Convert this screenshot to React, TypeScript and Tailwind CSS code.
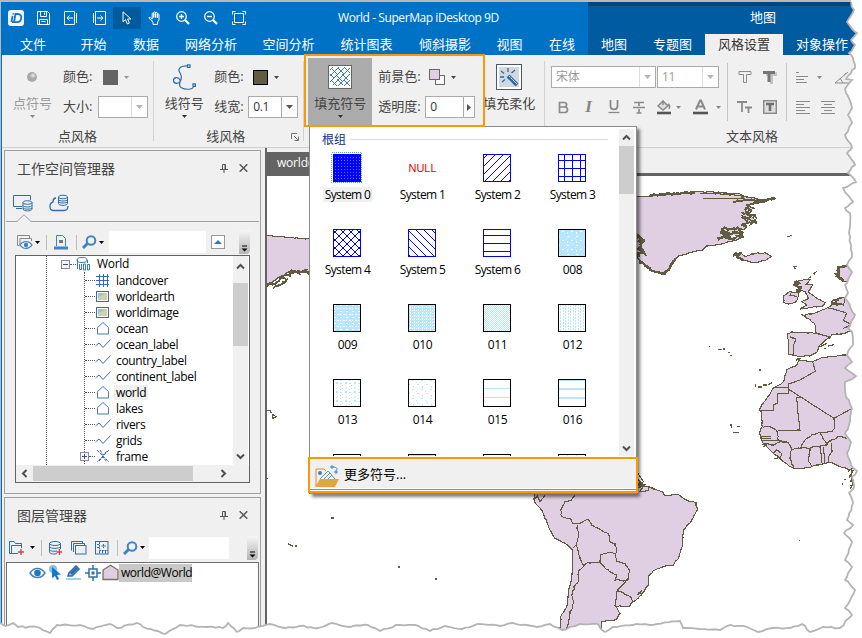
import React from "react";

type Pt = [number, number];

function parse(s: string): Pt[] {
  const n = s.trim().split(/[\s,]+/).map(Number);
  const out: Pt[] = [];
  for (let i = 0; i < n.length; i += 2) out.push([n[i], n[i + 1]]);
  return out;
}

// Subdivides a polyline and displaces the new vertices to give a ragged line.
function rough(s: string, amp: number, step: number, close = false): string {
  const p = parse(s);
  if (close) p.push(p[0]);
  let seed = 7;
  const rnd = () => {
    seed = (seed * 16807) % 2147483647;
    return seed / 2147483647 - 0.5;
  };
  let d = `M${p[0][0]} ${p[0][1]}`;
  for (let i = 1; i < p.length; i++) {
    const [ax, ay] = p[i - 1];
    const [bx, by] = p[i];
    const n = Math.max(1, Math.round(Math.hypot(bx - ax, by - ay) / step));
    for (let k = 1; k <= n; k++) {
      const t = k / n;
      const j = k === n ? 0 : amp;
      d += `L${(ax + (bx - ax) * t + rnd() * j).toFixed(1)} ${(ay + (by - ay) * t + rnd() * j).toFixed(1)}`;
    }
  }
  return close ? d + "Z" : d;
}

const RIGHT_EDGE =
  "851,2 854,10 847,22 852,29 857,33 851,40 855,45 849,53 853,58 855,68 846,79 852,80 845,89 852,108 848,115 852,123 845,135 852,148 847,153 855,165 848,173 856,182 843,188 853,202 845,208 850,213 849,233 852,257 847,265 852,272 845,285 848,293 845,298 855,315 848,328 852,332 853,345 847,355 852,362 845,368 856,376 845,382 846,397 852,408 849,425 845,433 851,442 847,453 851,465 857,471 852,477 854,488 849,493 853,503 847,520 853,525 844,533 852,542 845,560 852,567 845,580 855,590 845,608 852,615 840,628";
const BOTTOM_EDGE =
  "840,628 823,627 810,632 802,624 790,628 773,628 758,632 747,627 730,625 720,630 700,629 683,628 680,621 657,624 633,625 613,627 605,632 598,624 580,624 562,630 550,624 537,627 513,623 500,626 480,624 462,629 445,626 430,631 415,625 396,625 380,631 368,625 350,627 332,623 318,628 300,626 285,628 270,624 255,628 243,628 237,632 228,623 223,628 207,627 180,625 165,634 143,627 137,623 117,628 110,624 93,629 80,625 57,625 50,633 37,627 18,627 13,623 5,626 0,623";

function TornEdge() {
  const r = rough(RIGHT_EDGE, 1.6, 4);
  const b = rough(BOTTOM_EDGE, 1.6, 4);
  return (
    <svg className="pointer-events-none absolute inset-0" width="862" height="638" viewBox="0 0 862 638">
      <path d={r + b.replace(/^M/, "L") + "L0 638L862 638L862 0L851 0Z"} fill="#fff" />
      <path d={r + b.replace(/^M/, "L")} fill="none" stroke="#b4b4b4" strokeWidth="1.8" />
    </svg>
  );
}

function Caret({ c = "#444" }: { c?: string }) {
  return (
    <svg width="5" height="3" viewBox="0 0 5 3" className="shrink-0">
      <path d="M0 0H5L2.5 3Z" fill={c} />
    </svg>
  );
}

const G = "#8a8a8a";
const B = "#2e6da8";

/* ---------- title bar ---------- */

function QuickBar() {
  const cell = "flex h-[22px] w-[28px] items-center justify-center";
  return (
    <div className="flex h-[32px] items-center text-white">
      <div className="ml-[6px] flex h-4 w-4 items-center justify-center rounded-[3px] bg-[#f2f8fd]">
        <svg width="14" height="14" viewBox="0 0 14 14" fill="none" stroke="#1877c2" strokeWidth="1.8">
          <path d="M3.6 5L2.4 11M4.3 2.2V3.6" />
          <path d="M5 11.2L6.5 3H9C14 3 13 11.2 8 11.2H3" />
        </svg>
      </div>
      <div className="ml-[5px] flex items-center">
        <div className={cell}>
          <svg width="13" height="14" viewBox="0 0 13 14" fill="none" stroke="currentColor">
            <path d="M.5 .5H10.5L12.5 2.5V13.5H.5ZM3.5 .5V5.5H9.5V.5M7.5 1.5V4M2.5 13.5V8.5H10.5V13.5M4.5 10.5H8.5" />
          </svg>
        </div>
        <div className={cell}>
          <svg width="14" height="14" viewBox="0 0 14 14" fill="none" stroke="currentColor">
            <path d="M.5 .5H10.5V13.5H.5ZM12.5 2V12M9 7H3M5.5 4.5L3 7L5.5 9.5" />
          </svg>
        </div>
        <div className={cell}>
          <svg width="14" height="14" viewBox="0 0 14 14" fill="none" stroke="currentColor">
            <path d="M3.5 .5H13.5V13.5H3.5ZM1.5 2V12M5 7H11M8.5 4.5L11 7L8.5 9.5" />
          </svg>
        </div>
        <div className={cell + " bg-[#005a9e]"}>
          <svg width="11" height="14" viewBox="0 0 11 14" fill="none" stroke="currentColor">
            <path d="M1 .8V10.8L3.5 8.7L5.4 13L7.4 12.1L5.6 8H9Z" />
          </svg>
        </div>
        <div className={cell}>
          <svg width="14" height="14" viewBox="0 0 14 14" fill="none" stroke="currentColor">
            <path d="M4.5 10L1 7.4C.6 6.5 1.6 6 2.4 6.6L4.2 8V2.7C4.2 1.7 5.8 1.7 5.8 2.7V6.5M5.8 6.5V1.6C5.8 .5 7.5 .5 7.5 1.6V6.4V2C7.6 1 9.3 1 9.3 2V7V3.4C9.5 2.6 10.9 2.6 11 3.6V9L9.6 11V13.4H5V11.5L3.5 9.4" />
          </svg>
        </div>
        {[true, false].map((plus) => (
          <div className={cell} key={String(plus)}>
            <svg width="14" height="14" viewBox="0 0 14 14" fill="none" stroke="currentColor">
              <circle cx="5.5" cy="5.5" r="4.8" strokeWidth="1.2" />
              <path d={plus ? "M3 5.5H8M5.5 3V8" : "M3 5.5H8"} strokeWidth="1.4" />
              <path d="M9 9L13 13" strokeWidth="2.2" />
            </svg>
          </div>
        ))}
        <div className={cell}>
          <svg width="14" height="14" viewBox="0 0 14 14" fill="none" stroke="currentColor">
            <path d="M2.5 2.5H11.5V11.5H2.5ZM.5 3.5V.5H3.5M10.5 .5H13.5V3.5M13.5 10.5V13.5H10.5M3.5 13.5H.5V10.5" />
          </svg>
        </div>
      </div>
      <div className="ml-[85px] w-[164px] whitespace-nowrap text-[12px] tracking-[-0.42px]">World - SuperMap iDesktop 9D</div>
    </div>
  );
}

function Header() {
  const tab = "shrink-0 whitespace-nowrap text-center";
  return (
    <div className="flex h-[53px] w-full text-[13px] text-white">
      <div className="flex w-[586px] shrink-0 flex-col bg-[#0072c6]">
        <QuickBar />
        <div className="flex h-[21px] items-center leading-[21px]">
          <span className={tab + " w-[62px]"}>文件</span>
          <span className={tab + " w-[59px]"}>开始</span>
          <span className={tab + " w-[46px]"}>数据</span>
          <span className={tab + " w-[84px]"}>网络分析</span>
          <span className={tab + " w-[71px]"}>空间分析</span>
          <span className={tab + " w-[85px]"}>统计图表</span>
          <span className={tab + " w-[72px]"}>倾斜摄影</span>
          <span className={tab + " w-[57px]"}>视图</span>
          <span className={tab + " w-[48px]"}>在线</span>
        </div>
      </div>
      <div className="flex flex-1 flex-col border-t-4 border-[#004378] bg-[#005ba1]">
        <div className="h-[28px] pl-[162px] leading-[23px]">地图</div>
        <div className="flex h-[21px] leading-[21px]">
          <span className={tab + " w-[52px]"}>地图</span>
          <span className={tab + " w-[65px]"}>专题图</span>
          <span className={tab + " w-[78px] bg-[#f0f0f0] text-[#333]"}>风格设置</span>
          <span className={tab + " w-[78px]"}>对象操作</span>
        </div>
      </div>
    </div>
  );
}

/* ---------- ribbon ---------- */

function BigButton({ icon, label, w, caret = true, muted = false }: { icon: React.ReactNode; label: string; w: string; caret?: boolean; muted?: boolean }) {
  return (
    <div className={`flex h-[68px] shrink-0 flex-col items-center ${w} ${muted ? "text-[#9a9a9a]" : "text-[#444]"}`}>
      <div className="flex h-[38px] items-center">{icon}</div>
      <div className="h-[15px] whitespace-nowrap text-[13px] leading-[14px]">{label}</div>
      {caret && (
        <div className="mt-[4px] flex">
          <Caret c={muted ? "#888" : "#333"} />
        </div>
      )}
    </div>
  );
}

function Box({ value, w, side = false, muted = false }: { value: string; w: string; side?: boolean; muted?: boolean }) {
  return (
    <div className={`flex h-[22px] border border-[#ababab] bg-white ${w} ${muted ? "text-[#999]" : "text-[#333]"}`}>
      <div className="flex-1 pl-1 text-[12px] leading-[20px] tracking-[-0.3px]">{value}</div>
      <div className={`flex items-center justify-center border-l ${muted ? "border-[#ddd]" : "border-[#ababab] bg-[#fafafa]"} ${side ? "w-[11px]" : "w-[16px]"}`}>
        {side ? (
          <svg width="4" height="7" viewBox="0 0 4 7"><path d="M0 0L4 3.5L0 7Z" fill="#555" /></svg>
        ) : (
          <svg width="7" height="4" viewBox="0 0 7 4"><path d="M0 0H7L3.5 4Z" fill={muted ? "#b5b5b5" : "#555"} /></svg>
        )}
      </div>
    </div>
  );
}

function Fields({ a, b, swatch, box, w }: { a: string; b: string; swatch: React.ReactNode; box: React.ReactNode; w: string }) {
  return (
    <div className="flex h-[68px] flex-col pt-[4px] text-[13px] text-[#444]">
      <div className="flex h-[30px] items-center">
        <span className={`whitespace-nowrap ${w}`}>{a}</span>
        {swatch}
      </div>
      <div className="flex h-[30px] items-center">
        <span className={`whitespace-nowrap ${w}`}>{b}</span>
        {box}
      </div>
    </div>
  );
}

function LineSymbol() {
  return (
    <svg width="24" height="26" viewBox="0 0 24 26" fill="none" stroke={B} strokeWidth="1.2">
      <path d="M15.500 2C9 1.500 5.500 4.500 7.500 8S10 13 8.500 17C7 20.500 1.500 20 1.500 16.500S6.500 12.500 8 16C9 19 5.500 21 9 23.500C13 26 21 26 21.500 22.500" />
      <path d="M15.500 .8H18V3.300H15.500ZM21 19.800H23.400V22.300H21Z" fill="#f0f0f0" />
    </svg>
  );
}

function HatchSymbol() {
  return (
    <svg width="24" height="24" viewBox="0 0 24 24" fill="none">
      <rect x=".5" y=".5" width="23" height="23" fill="#fff" stroke="#666" />
      <path d="M2 5L5 2M2 11L11 2M2 17L17 2M5 20L22 3M10 21L22 9M16 21L22 15M2 9L6 13M4 4L10 10M10 3L16 9M17 3L22 8M8 10L14 16M14 9L20 15M3 15L9 21M9 14L15 20M16 15L22 21" stroke={B} strokeWidth=".9" />
    </svg>
  );
}

function WandSymbol() {
  return (
    <svg width="26" height="26" viewBox="0 0 26 26" fill="none">
      <rect x=".5" y=".5" width="25" height="25" fill="#fff" stroke="#4b5670" />
      <rect x="3" y="3" width="20" height="20" fill="#d3d8df" />
      <path d="M12 12L21 21" stroke={B} strokeWidth="4" />
      <path d="M13 12L21.500 20.500" stroke="#fff" strokeWidth="1" strokeDasharray="2 1" />
      <path d="M12 4V8M5 7L8 9.500M4 13H8M6 18L9 15.500M19 6L15.500 9" stroke={B} strokeWidth="1.3" />
    </svg>
  );
}

function FontTools() {
  const c = "flex w-[25px] items-center justify-center";
  return (
    <div className="flex flex-col pl-[6px] pt-[4px]">
      <div className="flex h-[30px] items-center gap-px">
        <Box value="宋体" w="w-[105px]" muted />
        <Box value="11" w="w-[62px]" muted />
      </div>
      <div className="flex h-[30px] items-center text-[#848484]">
        <span className={c}>
          <svg width="11" height="13" viewBox="0 0 11 13" fill="none" stroke={G} strokeWidth="1.700"><path d="M1.500 1.500H6C9.500 1.500 9.500 6 6 6H1.500ZM1.500 6H6.500C10.500 6 10.500 11.500 6.500 11.500H1.500Z" /></svg>
        </span>
        <span className={c + " font-['Liberation_Serif'] text-[17px] font-bold italic"}>I</span>
        <span className={c}>
          <svg width="12" height="14" viewBox="0 0 12 14" fill="none" stroke={G}><path d="M2.500 0V6C2.500 10.500 9.500 10.500 9.500 6V0" strokeWidth="1.800" /><path d="M.5 12.500H11.500" strokeWidth="1.300" /></svg>
        </span>
        <span className={c}>
          <svg width="12" height="13" viewBox="0 0 12 13"><path d="M1 1.500H11M6 1V5M0 6.500H12M6 8V12M3.500 12H8.500" stroke={G} strokeWidth="1.700" /></svg>
        </span>
        <span className={c}>
          <svg width="16" height="16" viewBox="0 0 16 16" fill="none"><path d="M7 2L12 7L7 11L2 7ZM7 6V1M12 5C14 6 14 8 13 10" stroke={G} strokeWidth="1.400" fill="#ddd" /><path d="M1 14H15" stroke="#555" strokeWidth="2.600" /></svg>
        </span>
        <span className="flex w-[12px]"><Caret c="#888" /></span>
        <span className={c}>
          <svg width="15" height="16" viewBox="0 0 15 16" fill="none"><path d="M3 10.500L7 1.500H8L12 10.500M4.500 7.500H10.500" stroke={G} strokeWidth="2" /><path d="M0 14H15" stroke="#555" strokeWidth="2.600" /></svg>
        </span>
        <span className="flex w-[8px] justify-end"><Caret c="#888" /></span>
      </div>
    </div>
  );
}

function TextEffects() {
  const c = "flex h-[30px] w-[25px] items-center justify-center";
  return (
    <div className="flex w-[58px] flex-wrap content-start pl-[4px] pt-[4px]">
      <span className={c}>
        <svg width="14" height="14" viewBox="0 0 14 14"><path d="M1 1.500H13V4.500H8.500V12.500H5.500V4.500H1Z" fill="none" stroke={G} /></svg>
      </span>
      <span className={c}>
        <svg width="14" height="14" viewBox="0 0 14 14"><path d="M3 2H14V6H10V14H7V6H3Z" fill="#c4c4c4" /><path d="M0 1H12V4H7.500V12H4.500V4H0Z" fill="#777" /></svg>
      </span>
      <span className={c}>
        <svg width="15" height="14" viewBox="0 0 15 14"><path d="M0 2H10M5 2V12M8 7.500H15M11.500 7.500V13" stroke={G} strokeWidth="1.800" /></svg>
      </span>
      <span className={c}>
        <svg width="14" height="14" viewBox="0 0 14 14"><rect x=".7" y=".7" width="12.600" height="12.600" fill="#ddd" stroke={G} strokeWidth="1.400" /><path d="M3 4H11M7 4V11" stroke="#707070" strokeWidth="2.600" /></svg>
      </span>
    </div>
  );
}

function ParagraphTools() {
  return (
    <div className="flex flex-col pl-[9px] pt-[4px]">
      <div className="flex h-[30px] items-center">
        <svg width="15" height="13" viewBox="0 0 15 13"><path d="M0 1.500H3M0 5.500H12M0 8.500H8M0 11.500H11" stroke={G} strokeWidth="1.200" /></svg>
        <span className="ml-[6px] flex"><Caret c="#888" /></span>
        <svg className="ml-[12px]" width="16" height="13" viewBox="0 0 16 13" fill="none" stroke={G}><path d="M14 1L1 12H15M6 7L9 12M10 4L12 2" /></svg>
      </div>
      <div className="flex h-[30px] items-center gap-[11px]">
        <svg width="14" height="14" viewBox="0 0 14 14"><path d="M0 1.500H14M0 4.500H8M0 7.500H14M0 10.500H9M0 13.500H14" stroke={G} /></svg>
        <svg width="14" height="14" viewBox="0 0 14 14"><path d="M0 1.500H14M3 4.500H11M0 7.500H14M3 10.500H11M0 13.500H14" stroke={G} /></svg>
      </div>
    </div>
  );
}

function Ribbon() {
  const sep = "mt-[6px] h-[80px] w-px shrink-0 bg-[#d2d2d2]";
  const cap = "text-center text-[13px] leading-[20px] text-[#444] h-[21px]";
  return (
    <div className="flex h-[93px] border-b border-[#cfcfcf] bg-[#f0f0f0]">
      <div className="flex w-[152px] flex-col">
        <div className="flex h-[72px] pt-[3px]">
          <BigButton w="w-[61px]" label="点符号" muted icon={<div className="-ml-[2px] h-[10px] w-[10px] rounded-full bg-[radial-gradient(circle_at_60%_35%,#eee_0,#a9a9a9_35%)]" />} />
          <Fields a="颜色:" b="大小:" w="w-[35px]"
            swatch={<><span className="ml-[5px] h-[15px] w-[15px] bg-[#646464]" /><span className="ml-[6px] flex"><Caret c="#999" /></span></>}
            box={<Box value="" w="w-[50px]" muted />} />
        </div>
        <div className={cap}>点风格</div>
      </div>
      <div className={sep} />
      <div className="flex w-[150px] flex-col">
        <div className="flex h-[72px] pt-[3px]">
          <BigButton w="w-[60px]" label="线符号" icon={<LineSymbol />} />
          <Fields a="颜色:" b="线宽:" w="w-[34px]"
            swatch={<><span className="ml-[5px] h-[15px] w-[15px] border border-black bg-[#605c42]" /><span className="ml-[6px] flex"><Caret /></span></>}
            box={<Box value="0.1" w="w-[50px]" />} />
        </div>
        <div className="flex items-center">
          <div className={cap + " w-[142px] shrink-0 pl-px"}>线风格</div>
          <svg className="-ml-[5px]" width="8" height="8" viewBox="0 0 8 8" fill="none" stroke="#777"><path d="M.5 6V.5H6M3 3L7 7M7.500 3.500V7.500H3.500" /></svg>
        </div>
      </div>
      <div className={sep} />
      <div className="flex w-[241px]">
        <div className="ml-[4px] mt-[3px] h-[68px] w-[64px] bg-[#acacac]">
          <BigButton w="w-[64px]" label="填充符号" icon={<HatchSymbol />} />
        </div>
        <div className="ml-[6px] mt-[3px]">
          <Fields a="前景色:" b="透明度:" w="w-[47px]"
            swatch={
              <>
                <svg className="ml-[4px]" width="16" height="16" viewBox="0 0 16 16"><rect x="6.500" y="6.500" width="9" height="9" fill="#fff" stroke="#666" /><rect x=".5" y=".5" width="10" height="10" fill="#e0cee2" stroke="#666" /></svg>
                <span className="ml-[6px] flex"><Caret /></span>
              </>
            }
            box={<Box value="0" w="w-[50px]" side />} />
        </div>
        <div className="ml-[9px] mt-[3px]">
          <BigButton w="w-[50px]" label="填充柔化" caret={false} icon={<WandSymbol />} />
        </div>
      </div>
      <div className={sep} />
      <div className="flex flex-1 flex-col">
        <div className="flex h-[72px] pt-[3px]">
          <div className="w-[182px]"><FontTools /></div>
          <div className="mt-[5px] h-[58px] w-px bg-[#c4c4c4]" />
          <TextEffects />
          <div className="mt-[5px] h-[58px] w-px bg-[#c4c4c4]" />
          <ParagraphTools />
        </div>
        <div className={cap + " pl-[97px]"}>
          <div className="w-[220px]">文本风格</div>
        </div>
      </div>
    </div>
  );
}

/* ---------- docked panels ---------- */

function PanelTitle({ text }: { text: string }) {
  return (
    <div className="flex h-[34px] shrink-0 items-center pl-[12px] pr-[12px] text-[14px] text-[#444]">
      <span className="flex-1">{text}</span>
      <svg width="8" height="9" viewBox="0 0 8 9" fill="none" stroke="#555"><path d="M2.500 5.500V.5H5.500V5.500M5 1V5M0 5.500H8M4 6V9" /></svg>
      <svg className="ml-[11px]" width="9" height="8" viewBox="0 0 9 8" stroke="#555" strokeWidth="1.500"><path d="M.7 .3L8.300 7.700M8.300 .3L.7 7.700" /></svg>
    </div>
  );
}

function Search() {
  return (
    <svg width="15" height="14" viewBox="0 0 15 14" fill="none" stroke="#3f83c4">
      <circle cx="9" cy="5.500" r="4.300" strokeWidth="2" />
      <path d="M5.500 8.500L1 13" strokeWidth="3" />
    </svg>
  );
}

function More() {
  return (
    <div className="flex h-[24px] w-[11px] items-end justify-center rounded-br-[4px] bg-gradient-to-b from-[#f6f6f6] to-[#b4b4b4] pb-[2px]">
      <svg width="7" height="7" viewBox="0 0 7 7"><path d="M1 1H6" stroke="#000" /><path d="M.5 3.500H6.500L3.500 6.500Z" fill="#000" /></svg>
    </div>
  );
}

const tree: [string, string][] = [
  ["landcover", "grid"], ["worldearth", "image"], ["worldimage", "image"], ["ocean", "region"], ["ocean_label", "line"],
  ["country_label", "line"], ["continent_label", "line"], ["world", "region"], ["lakes", "region"], ["rivers", "line"], ["grids", "line"], ["frame", "cad"],
];

function TreeIcon({ kind }: { kind: string }) {
  const s = "#3568c0";
  return (
    <svg className="shrink-0" width="16" height="14" viewBox="0 0 16 14" fill="none" stroke={s}>
      {kind === "grid" && <path d="M4.500 1V14M8.500 1V14M12.500 1V14M1 3.500H14M1 7.500H14M1 11.500H14" />}
      {kind === "image" && (<><rect x="1.500" y="2.500" width="12" height="10" fill="#fff" /><path d="M3 4H12V11H3Z" fill="#cfd3a0" stroke="none" /><path d="M3 4H11L3 8.500Z" fill="#98c2df" stroke="none" /></>)}
      {kind === "region" && <path d="M2.500 13V6.500L8 1.500L13.500 6.500V13Z" stroke="#3f7ac6" />}
      {kind === "line" && <path d="M.5 9L4 6L8 10.500L15.500 2.500" />}
      {kind === "cad" && <path d="M2 1L14 13M14 1L2 13M5 1L8 6L12 2M4 12L8 8L12 13" strokeDasharray="3 1" />}
    </svg>
  );
}

function Chevron({ d }: { d: string }) {
  return <svg width="9" height="9" viewBox="0 0 9 9" fill="none" stroke="#505050" strokeWidth="2"><path d={d} /></svg>;
}

function Expander({ plus = false }: { plus?: boolean }) {
  return (
    <svg className="shrink-0" width="9" height="9" viewBox="0 0 9 9"><rect x=".5" y=".5" width="8" height="8" fill="#f4f4f4" stroke="#8c8c8c" /><path d={plus ? "M2 4.500H7M4.500 2V7" : "M2 4.500H7"} stroke="#334f9b" /></svg>
  );
}

function Tree() {
  return (
    <div className="ml-[10px] flex h-[228px] w-[235px] flex-col border border-[#636363] bg-white text-[12px] leading-[16px] tracking-[-0.33px] text-black">
      <div className="flex h-[209px]">
        <div className="flex w-[217px] overflow-hidden">
          <div className="ml-[30px] h-full border-l border-dotted border-[#555]" />
          <div className="ml-[14px] w-[172px]">
            <div className="flex h-4 items-center">
              <Expander />
              <span className="w-[6px] border-t border-dotted border-[#555]" />
              <svg width="14" height="15" viewBox="0 0 14 15" fill="none" stroke="#3b79b7"><ellipse cx="6" cy="3" rx="5" ry="2.500" /><path d="M1.500 3V12M11.500 3V6M3.500 7V12.500H5.500V7M7.500 7V13H9.500V7ZM11.500 7.500H13.500V13H11.500Z" /></svg>
              <span className="ml-[7px]">World</span>
            </div>
            <div className="ml-[23px] border-l border-dotted border-[#555]">
              {tree.map(([name, kind]) => (
                <div className="flex h-4 items-center" key={name}>
                  {name === "frame" ? (
                    <><span className="-ml-[5px]"><Expander plus /></span><span className="w-[6px] border-t border-dotted border-[#555]" /></>
                  ) : (
                    <span className="w-[10px] border-t border-dotted border-[#555]" />
                  )}
                  <TreeIcon kind={kind} />
                  <span className={"ml-[3px] px-[2px] leading-[15px] " + (name === "world" ? "bg-[#f0f0f0]" : "")}>{name}</span>
                </div>
              ))}
            </div>
          </div>
        </div>
        <div className="flex w-[15px] flex-col items-center bg-[#f0f0f0] pb-1">
          <div className="flex h-[27px] items-center pb-[7px]"><Chevron d="M1 6.500L4.500 3L8 6.500" /></div>
          <div className="h-[63px] w-full bg-[#cdcdcd]" />
          <div className="flex-1" />
          <Chevron d="M1 2.500L4.500 6L8 2.500" />
        </div>
      </div>
      <div className="flex h-[17px] items-center bg-[#f0f0f0]">
        <span className="flex w-[17px] justify-center"><Chevron d="M6.500 1L3 4.500L6.500 8" /></span>
        <span className="h-[15px] w-[160px] bg-[#cdcdcd]" />
        <span className="ml-[26px] flex"><Chevron d="M2.500 1L6 4.500L2.500 8" /></span>
      </div>
    </div>
  );
}

function WorkspacePanel() {
  const vs = "h-[15px] w-px bg-[#bdbdbd]";
  return (
    <div className="flex h-[344px] flex-col border border-[#a0a0a0]">
      <PanelTitle text="工作空间管理器" />
      <div className="flex h-[29px] items-center pl-[8px] pt-[7px]">
        <svg width="20" height="18" viewBox="0 0 20 18" fill="none" stroke={B}><path d="M9 12.500H.5V1.500H17.500V6M3 14.500H9" /><ellipse cx="14.500" cy="8.500" rx="4.500" ry="1.800" fill="#f0f0f0" /><path d="M10 8.500V15C10 17.500 19 17.500 19 15V8.500M10 11.500C11 13.500 18 13.500 19 11.500M10 14C11 15.500 18 15.500 19 14" /></svg>
        <svg className="ml-[16px]" width="20" height="18" viewBox="0 0 20 18" fill="none" stroke={B}><path d="M7 4C4 4 4 8 4 8C0 9 0 16 4 16.500H15C18 16.500 19 15 19 12" strokeWidth="1.300" /><ellipse cx="14" cy="3" rx="4.500" ry="1.800" /><path d="M9.500 3V9.500C9.500 12 18.500 12 18.500 9.500V3M9.500 5.500C10 7.500 18 7.500 18.500 5.500M9.500 7.500C10 9.500 18 9.500 18.500 7.500" /></svg>
      </div>
      <svg width="255" height="10" viewBox="0 0 255 10" fill="none" stroke="#a0a0a0"><path d="M1 7.500H12L19 .8L26 7.500H254" /></svg>
      <div className="flex h-[31px] items-center pl-[10px] pt-[5px]">
        <div className="flex w-[31px] items-center">
          <svg className="ml-[2px]" width="16" height="15" viewBox="0 0 16 15" fill="none"><path d="M2 10.500H.5V.5H12.500V3M3 11V3.500H14.500V6" stroke="#888" /><path d="M3 10C6 5.500 12 5.500 15 10C12 14.500 6 14.500 3 10Z" fill="#fff" stroke="#3f83c4" strokeWidth="1.300" /><circle cx="9" cy="10" r="2.200" fill="#3f83c4" /></svg>
          <span className="ml-[2px] flex"><Caret c="#000" /></span>
        </div>
        <div className={vs} />
        <svg className="ml-[7px] mr-[8px]" width="14" height="15" viewBox="0 0 14 15" fill="none"><path d="M2.500 11V.5H8.500L11.500 3.500V11" stroke="#3f83c4" /><path d="M5 5H9V8H5Z" fill="#777" /><path d="M0 13H14" stroke="#3f83c4" strokeWidth="3" /></svg>
        <div className={vs} />
        <div className="ml-[5px] flex w-[27px] items-center"><Search /><span className="ml-[2px] flex"><Caret c="#000" /></span></div>
        <div className="h-[22px] w-[97px] bg-white" />
        <div className="ml-[5px] flex h-[14px] w-[14px] items-center justify-center border border-[#999] bg-white"><svg width="8" height="4" viewBox="0 0 8 4"><path d="M0 4L4 0L8 4Z" fill="#2f7bbf" /></svg></div>
        <div className="ml-[14px]"><More /></div>
      </div>
      <Tree />
    </div>
  );
}

function LayerPanel() {
  const vs = "h-[16px] w-px bg-[#bdbdbd]";
  return (
    <div className="mt-[3px] flex h-[142px] flex-col border border-[#a0a0a0]">
      <PanelTitle text="图层管理器" />
      <div className="flex h-[30px] items-center pl-[4px] pt-px">
        <svg width="15" height="14" viewBox="0 0 15 14" fill="none" stroke={B}><path d="M9 12.500H.5V.5H5L6.500 2.500H12.500V7M2.500 12V4.500H13" /><path d="M9 11H15M12 8V14" stroke="#d2492a" strokeWidth="1.400" /></svg>
        <span className="ml-[6px] mr-[6px] flex"><Caret c="#000" /></span>
        <div className={vs} />
        <svg className="ml-[7px]" width="13" height="14" viewBox="0 0 13 14" fill="none" stroke={B}><ellipse cx="6" cy="2.500" rx="5.500" ry="2" /><path d="M.5 2.500V11C.5 13 6 13.500 8 12.500M11.500 2.500V8M.5 5.500C1 8 11 8 11.500 5.500M.5 8.500C1 10.500 6 10.500 8 10" /><path d="M7.500 11H13M10.500 8V14" stroke="#d2492a" strokeWidth="1.400" /></svg>
        <svg className="ml-[9px]" width="16" height="14" viewBox="0 0 16 14" fill="none" stroke={B}><path d="M.5 9.500V.5H11.500V2.500M2.500 11V2.500H13.500V4.500" /><rect x="4.500" y="4.500" width="10.500" height="8.500" /></svg>
        <svg className="ml-[8px]" width="14" height="14" viewBox="0 0 14 14" fill="none" stroke={B}><rect x=".5" y=".5" width="12.500" height="12.500" /><path d="M4.500 1V9.500H13M2 3.500H4M2 6.500H4M4.500 10V13M7.500 10V13M10.500 10V13M8.500 3V7M6.500 5H11" strokeDasharray="2 .7" /></svg>
        <div className={"ml-[8px] " + vs} />
        <div className="ml-[5px] flex w-[26px] items-center"><Search /><span className="ml-[2px] flex"><Caret c="#000" /></span></div>
        <div className="h-[22px] w-[80px] bg-white" />
        <div className="ml-[18px]"><More /></div>
      </div>
      <div className="mx-[1px] flex flex-1 flex-col border border-[#707070] bg-white pl-[22px]">
        <div className="flex h-[19px] items-center">
          <svg width="17" height="12" viewBox="0 0 17 12" fill="none"><path d="M1 6C5 0 12 0 16 6C12 12 5 12 1 6Z" fill="#fff" stroke="#3f83c4" strokeWidth="1.500" /><circle cx="8.500" cy="6" r="3.300" fill="#1d78c5" /></svg>
          <svg className="ml-[3px]" width="13" height="15" viewBox="0 0 13 15"><circle cx="4" cy="4" r="4" fill="#8ac0ea" /><path d="M3 2L12 9.500L8 10L10 14L8 15L6 11L3 13Z" fill="#1579cb" /></svg>
          <svg className="ml-[3px]" width="17" height="15" viewBox="0 0 17 15" fill="none"><path d="M3 11L4 8L11 1L14 4L7 11Z" stroke="#2e6da8" strokeWidth="1.500" fill="#a9c7e0" /><path d="M6 9L12 3" stroke="#2e6da8" strokeWidth="3" /><path d="M1 14H16" stroke="#8ac0ea" strokeWidth="1.500" /></svg>
          <svg className="ml-[3px]" width="16" height="16" viewBox="0 0 16 16" fill="none" stroke="#2e6da8"><path d="M8 0V4M8 12V16M0 8H4M12 8H16" strokeWidth="1.500" /><rect x="4" y="4" width="8" height="8" strokeWidth="1.500" /><path d="M6.500 8H9.500" strokeWidth="3" /></svg>
          <svg className="ml-[1px]" width="17" height="17" viewBox="0 0 17 17"><path d="M1 15.500V6L8.500 1.200L16 6V15.500Z" fill="#e0cee2" stroke="#777266" strokeWidth="1.300" /></svg>
          <span className="h-[18px] w-[73px] whitespace-nowrap bg-[#c8c8c8] pl-[2px] text-[12px] leading-[18px] tracking-[-0.45px] text-black">world@World</span>
        </div>
      </div>
    </div>
  );
}

/* ---------- map ---------- */

function Land({ d, amp = 4 }: { d: string; amp?: number }) {
  return <path d={rough(d, amp, 8, true)} fill="#e0cee2" />;
}
function Border({ d, amp = 3 }: { d: string; amp?: number }) {
  return <path d={rough(d, amp, 8)} fill="none" />;
}

function WorldMap() {
  return (
    <svg className="block" width="595" height="462" viewBox="267 176 595 462" stroke="#605c42" strokeWidth="3.4" shapeRendering="crispEdges">
      <g transform="translate(260 120) scale(.33333)">
        <Land d="10,345 85,352 160,357 160,455 125,458 95,450 65,468 20,498" />
        <path d={rough("22,496 50,488 75,465 110,456 148,456", 12, 5)} fill="none" strokeWidth="6" />
        <path d={rough("40,503 75,488 80,480 55,495", 7, 5)} fill="none" strokeWidth="5" />
      </g>
      <g transform="translate(630 150) scale(.33333)">
        <Land d="10,142 60,138 130,132 200,125 250,126 330,132 345,140 385,148 438,145 400,155 350,165 375,175 350,185 365,200 380,215 345,220 350,232 330,240 340,262 320,270 270,283 228,288 215,302 185,308 145,318 125,345 105,372 90,368 65,362 30,332 10,310" />
        <path d={rough("60,136 130,131 195,128", 5, 6)} fill="none" strokeWidth="8" />
        <path d={rough("210,130 280,132 335,138 345,146 220,145", 4, 6)} fill="none" />
        <path d={rough("310,156 345,150 400,152 435,146 350,165", 5, 6)} fill="none" strokeWidth="6" />
        <path d={rough("350,170 362,185 340,190 375,195 335,205 378,215 335,225 350,230", 16, 5)} fill="none" strokeWidth="5" />
        <path d={rough("275,235 330,238 335,250 270,248 300,262 265,265 335,262", 9, 5)} fill="none" strokeWidth="7" />
        <path d="M298 262L310 254L322 262Z" fill="#fff" stroke="none" />
        <path d={rough("25,255 35,275 28,295 38,300 25,320", 16, 4)} fill="none" strokeWidth="8" />
        <path d={rough("30,332 65,362 90,368 105,372 120,350 135,325", 6, 5)} fill="none" strokeWidth="7" />
        <Land d="312,314 330,308 345,320 365,312 405,308 425,320 405,332 370,338 340,332" />
        <path d={rough("312,314 335,308 320,320 340,330", 7, 4)} fill="none" strokeWidth="6" />
        <path d="M472 260L485 257M490 350H500M493 350L496 357M550 372L560 364M530 390L542 380M553 368V376" fill="none" />
        <Land d="505,392 540,388 530,402 548,405 535,425 560,445 585,458 575,470 545,472 510,478 530,465 515,455 535,445 525,425 505,415" />
        <path d={rough("495,393 508,400 490,405 512,412 502,425 515,415", 8, 4)} fill="none" strokeWidth="6" />
        <Land d="462,437 480,425 507,428 500,455 475,462 460,457" />
        <Border d="485,425 480,435 500,440" />
        <Land d="680,335 650,345 622,352 620,378 640,395 680,390" />
        <path d={rough("652,345 625,352 622,380 640,393", 8, 4)} fill="none" strokeWidth="7" />
      </g>
      <g transform="translate(630 310) scale(.33333)">
        <Land d="518,15 545,12 590,-5 605,-15 625,-35 690,-38 690,55 635,72 605,75 598,85 558,68 555,45 540,28" />
        <Border d="590,-8 620,0 650,10 640,30 665,45 640,55" />
        <Border d="605,-18 640,-15 645,-35" />
        <path d={rough("605,-25 625,-33 612,-18 635,-20", 8, 4)} fill="none" strokeWidth="5" />
        <Land d="472,72 485,66 558,70 600,80 570,105 560,128 540,138 505,140 475,132 475,95" />
        <Border d="480,80 497,85 490,110 490,135" />
        <Land d="507,150 520,152 548,155 580,142 640,135 700,140 700,475 660,478 630,470 605,458 580,460 545,470 520,475 490,475 460,455 430,430 400,400 388,370 397,350 395,305 388,300 410,265 430,235 460,215 470,180 500,165" amp={3} />
        <g fill="none">
          <path d="M430 233H476V250H442V280L430 285V301H390M476 238L612 325L665 296M476 232V222L510 210L550 187L556 183L548 155M520 262H500L504 310L510 360L445 362M612 325L614 355L605 365L570 368" />
          <path d={rough("397,350 420,350 440,362 445,390 475,398 485,418 510,415 525,390 545,375 570,368 590,400 605,390 625,380 650,385", 4, 6)} />
          <path d={rough("485,418 480,445 490,473", 4, 6)} />
          <path d={rough("510,412 540,415 535,450 545,470", 4, 6)} />
          <path d={rough("540,412 590,405 600,390", 4, 6)} />
          <path d="M570 412L574 435V460M580 410L585 460M605 398L606 425L596 440V458" />
          <path d={rough("400,400 430,405 450,395 475,398", 4, 6)} />
          <path d={rough("430,430 440,420 455,430 450,445 432,445", 4, 6)} />
          <path d="M390 380H424M390 386H424M395 404H412M400 410L412 404M392 392H450" strokeWidth="4" />
          <path d="M237 109H240M263 119H276M280 117H285M295 127H300M303 135V137M387 180H393M376 232V222M385 231H395M400 225H410M414 225L427 218M300 345H307M303 350L306 354M310 368H326M322 350H329M570 110L590 100M595 108L612 104M583 115H587M635 523L640 520M645 508V510" strokeWidth="4" />
          <path d={rough("500,148 510,146 507,152", 5, 4)} strokeWidth="5" />
          <path d={rough("655,478 668,482 660,495 668,520 660,535", 8, 4)} strokeWidth="4" />
        </g>
      </g>
      <g transform="translate(500 470) scale(.33333)">
        <Land d="103,60 410,20 420,35 428,48 452,52 488,65 495,77 535,73 560,90 588,98 592,120 575,150 550,180 547,220 537,260 520,285 490,290 460,302 445,318 445,345 425,375 400,395 385,410 345,408 360,430 350,448 305,455 300,500 180,500 182,440 200,410 205,370 215,320 218,240 195,220 165,205 150,180 125,120 103,95" amp={3} />
        <g fill="none">
          <path d={rough("225,75 215,90 195,95 182,120 185,140 215,148 218,160 240,160 265,148 275,165 310,185 325,190 330,215 345,220 350,250", 4, 7)} />
          <path d={rough("232,165 235,195 228,225 240,265 250,290 262,278 300,278 302,255 325,248 345,250 350,275 375,280 388,300 385,325 370,333 345,330 350,315 325,300 300,278", 4, 7)} />
          <path d={rough("250,290 235,305 235,335 222,350 215,375 220,400 210,430 205,460 200,480", 5, 7)} />
          <path d={rough("388,325 352,360 345,405", 4, 7)} />
          <path d={rough("352,360 390,380 400,395", 4, 7)} />
          <path d={rough("218,235 228,225", 2, 7)} />
          <path d="M103 90L112 78L120 95L135 76M410 5L430 35L415 45L445 50V62L418 65L430 50M440 48L465 60" />
          <path d={rough("412,40 432,45 418,52 428,40", 7, 4)} strokeWidth="6" />
          <path d="M412 375L425 362M415 368L425 372M897 211H900M1025 43H1028M1036 28V30" />
        </g>
      </g>
      <g transform="translate(260 300) scale(.33333)" fill="none">
        <path d="M20 332H30L35 340M37 343L49 350L38 355ZM22 535H24" />
      </g>
      <path d="M288 544L293 546M295 546H297M331 518H334M398 567H400M435 579H437" strokeWidth="1.500" />
    </svg>
  );
}

/* ---------- symbol gallery ---------- */

const LB = "#b8e6ff";
const symbols: { id: string; d?: string; line?: string; dots?: string }[] = [
  { id: "System 0" }, { id: "System 1" },
  { id: "System 2", d: "M0 5L5 0M0 13L13 0M0 21L21 0M1 28L28 1M9 28L28 9M17 28L28 17M25 28L28 25" },
  { id: "System 3", d: "M6.500 0V28M14.500 0V28M22.500 0V28M0 6.500H28M0 14.500H28M0 22.500H28" },
  { id: "System 4", d: "M0 5L5 0M0 13L13 0M0 21L21 0M1 28L28 1M9 28L28 9M17 28L28 17M25 28L28 25M23 0L28 5M15 0L28 13M7 0L28 21M0 1L27 28M0 9L19 28M0 17L11 28M0 25L3 28" },
  { id: "System 5", d: "M23 0L28 5M15 0L28 13M7 0L28 21M0 1L27 28M0 9L19 28M0 17L11 28M0 25L3 28" },
  { id: "System 6", d: "M0 6.500H28M0 14.500H28M0 22.500H28" },
  { id: "008", dots: "a" }, { id: "009", dots: "b" }, { id: "010", dots: "c" }, { id: "011", dots: "d" }, { id: "012", dots: "e" },
  { id: "013", dots: "f" }, { id: "014", dots: "g" },
  { id: "015", line: "M1 9.500H27M1 18.500H27" }, { id: "016", line: "M1 1.500H27M1 9.500H27M1 10.500H27M1 18.500H27M1 19.500H27" },
  { id: "" }, { id: " ", line: "M1 1.500H27" }, { id: "  ", line: "M1 2.500H27" }, { id: "   ", line: "M9.500 1V28M18.500 1V28" },
];

function DotPatterns() {
  return (
    <svg className="absolute h-0 w-0">
      <defs>
        <pattern id="a" width="9" height="9" patternUnits="userSpaceOnUse"><path d="M0 0H9V9H0Z" fill={LB} /><path d="M4 2.500H6M0 7.500H2M.5 3V5M8 0H9" stroke="#fff" /></pattern>
        <pattern id="b" width="6" height="6" patternUnits="userSpaceOnUse"><path d="M0 0H6V6H0Z" fill={LB} /><path d="M1 1.500H3M4 4.500H6M1 4.500H2" stroke="#fff" /></pattern>
        <pattern id="c" width="4" height="3" patternUnits="userSpaceOnUse"><path d="M0 0H4V3H0Z" fill={LB} /><path d="M0 .5H1M2 2.500H3M2 .5H3" stroke="#fff" /></pattern>
        <pattern id="d" width="2" height="2" patternUnits="userSpaceOnUse"><path d="M0 0H2V2H0Z" fill="#fff" /><path d="M0 0H1V1H0ZM1 1H2V2H1Z" fill={LB} /></pattern>
        <pattern id="e" width="5" height="3" patternUnits="userSpaceOnUse"><path d="M0 0H1V2H0ZM2 1H3V3H2Z" fill={LB} /></pattern>
        <pattern id="f" width="9" height="9" patternUnits="userSpaceOnUse"><path d="M3 3H5V5H3ZM0 0H1V1H0ZM7 1H8V2H7ZM0 6H1V7H0ZM7 7H8V8H7ZM4 8H5V9H4ZM3 0H4V1H3ZM7 4H9V5H7Z" fill={LB} /></pattern>
        <pattern id="g" width="9" height="9" patternUnits="userSpaceOnUse"><path d="M4 1H6V2H4ZM0 5H2V6H0ZM5 7H6V9H5ZM8 3H9V4H8Z" fill={LB} /></pattern>
      </defs>
    </svg>
  );
}

const fills: Record<string, string> = { a: "url(#a)", b: "url(#b)", c: "url(#c)", d: "url(#d)", e: "url(#e)", f: "url(#f)", g: "url(#g)" };

function SymbolCell({ s }: { s: (typeof symbols)[number] }) {
  const blue = s.id.startsWith("System");
  return (
    <div className="flex h-[75px] w-[75px] flex-col items-center text-[12px] text-black">
      {s.id === "System 1" ? (
        <div className="h-[28px] font-['Liberation_Sans'] text-[11px] leading-[28px] text-[#f00000]">NULL</div>
      ) : (
        <svg className="-ml-px shrink-0 overflow-visible" width="28" height="28" viewBox="0 0 28 28" shapeRendering="crispEdges">
          {s.id === "System 0" && <rect x="-1.500" y="-1.500" width="30" height="30" fill="none" stroke="#4a9ce8" strokeDasharray="1 1" />}
          <rect x=".5" y=".5" width="27" height="27" fill={s.id === "System 0" ? "#0000ff" : s.dots ? fills[s.dots] : "#fff"} stroke={blue ? "#0000ff" : "#000"} />
          {s.id === "System 0" && <path d="M2 3.500H27M2 6.500H27M2 9.500H27M2 12.500H27M2 15.500H27M2 18.500H27M2 21.500H27M2 24.500H27" stroke="#4d7dff" strokeDasharray="1 2" />}
          {s.d && <path d={s.d} stroke="#0000ff" fill="none" />}
          {s.line && <path d={s.line} stroke={LB} fill="none" />}
        </svg>
      )}
      <span className={"mt-[5px] h-[15px] whitespace-nowrap px-[2px] leading-[15px] " + (blue ? "tracking-[-0.6px] " : "tracking-[-0.3px] ") + (s.id === "System 0" ? "bg-[#f0f0f0]" : "")}>{s.id}</span>
    </div>
  );
}

function Gallery() {
  return (
    <div className="absolute left-[309px] top-[126px] flex h-[368px] w-[328px] flex-col border border-[#8a8a8a] bg-white shadow-[3px_3px_3px_rgba(0,0,0,0.5)]">
      <DotPatterns />
      <div className="flex h-[331px] overflow-hidden">
        <div className="flex w-[309px] flex-col">
          <div className="flex h-[27px] shrink-0 items-center pb-[2px] pl-[12px] text-[12px] text-[#0a2f8c]">
            根组<div className="ml-[4px] h-px w-[258px] bg-[#d5dcea]" />
          </div>
          <div className="grid grid-cols-[repeat(4,75px)]">
            {symbols.map((s) => <SymbolCell s={s} key={s.id} />)}
          </div>
        </div>
        <div className="mt-[2px] flex w-[15px] flex-col items-center bg-[#f0f0f0]">
          <div className="flex h-[17px] items-center"><Chevron d="M1 6.500L4.500 3L8 6.500" /></div>
          <div className="h-[48px] w-full bg-[#cdcdcd]" />
          <div className="flex-1" />
          <div className="flex h-[15px] items-center"><Chevron d="M1 2.500L4.500 6L8 2.500" /></div>
        </div>
      </div>
      <div className="-ml-[2px] mt-[1px] h-[36px] w-[330px] shrink-0 border-2 border-[#fb9804] bg-white">
        <div className="flex h-[29px] items-center bg-[#f0f0f0] pl-[5px] text-[13px] text-black">
          <svg className="mt-[6px]" width="25" height="23" viewBox="0 0 25 23" fill="none">
            <path d="M1 21V4H9L11 6" stroke="#e0883a" /><circle cx="5" cy="8" r="2" fill="#3f83c4" />
            <path d="M5 14L13 6L16 9M8 15L15 8L20 14M12 15L17 10" stroke="#5aa29a" />
            <path d="M16 1H18V3H16ZM18 2C22 2 23 4 21 6M20 6H22V8H20Z" stroke="#3f83c4" />
            <path d="M5 14H24L20 22H0Z" fill="#e0a73d" />
          </svg>
          <span className="ml-[4px] pt-[3px]">更多符号...</span>
        </div>
        <div className="mt-[1px] h-px bg-[#8c8c8c]" />
      </div>
    </div>
  );
}

export default function App() {
  return (
    <div className="relative h-[638px] w-[862px] overflow-hidden bg-[#f0f0f0] font-['Open_Sans','Noto_Sans_CJK_SC',sans-serif]">
      <div className="flex h-[638px] flex-col border-l border-t-2 border-[#b9b9b9]">
        <div className="flex flex-1 flex-col border-l border-[#0072c6]">
          <Header />
          <Ribbon />
          <div className="flex flex-1">
            <div className="flex w-[259px] flex-col pl-[2px] pt-[2px]">
              <WorkspacePanel />
              <LayerPanel />
            </div>
            <div className="ml-[4px] flex w-[597px] flex-col border-l-2 border-[#646464]">
              <div className="flex h-[28px] items-end border-b-[3px] border-[#646464] pt-[4px]">
                <div className="h-[21px] w-[80px] bg-[#646464] pl-[10px] text-[12px] leading-[22px] tracking-[-0.2px] text-white">world@World</div>
              </div>
              <div className="h-[462px] bg-white"><WorldMap /></div>
            </div>
          </div>
        </div>
      </div>
      <Gallery />
      <div className="absolute left-[304px] top-[54px] h-[73px] w-[181px] border-2 border-[#fb9804]" />
      <TornEdge />
    </div>
  );
}
